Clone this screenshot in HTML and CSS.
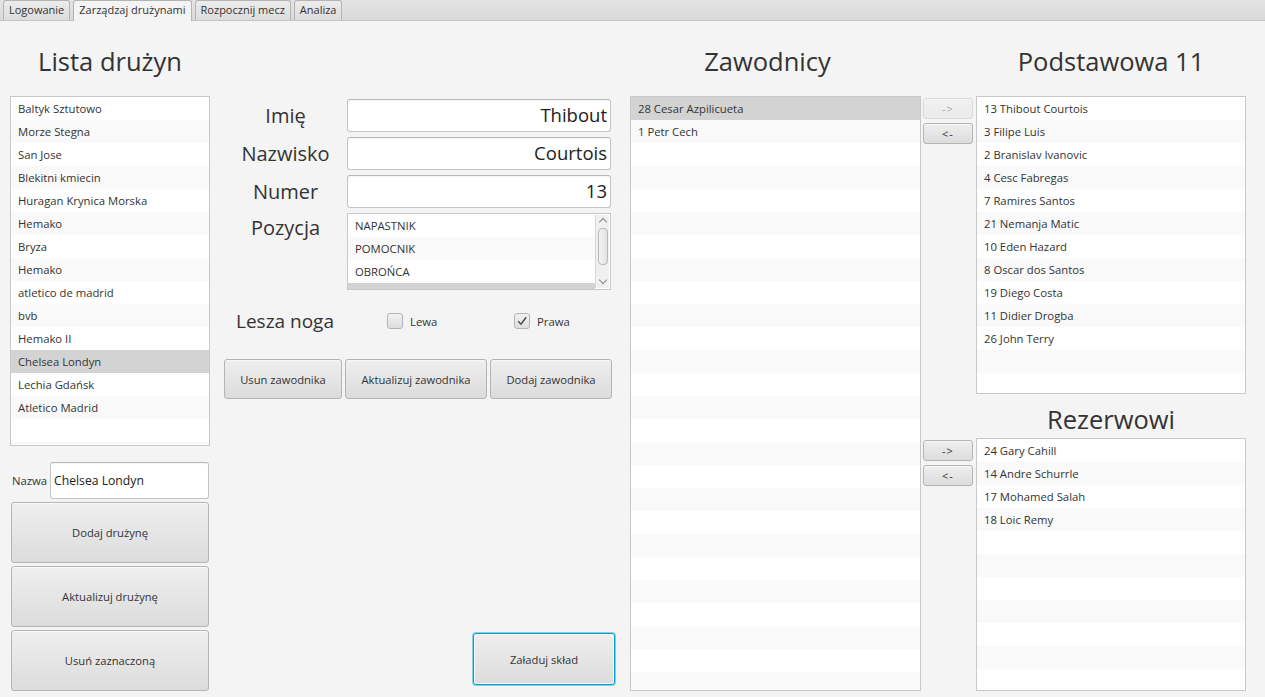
FILE: index.html
```html
<!DOCTYPE html>
<html lang="pl">
<head>
<meta charset="utf-8">
<title>Zarządzaj drużynami</title>
<link rel="stylesheet" href="styles.css">
</head>
<body>
<div class="tabs">
  <div class="tab">Logowanie</div>
  <div class="tab active">Zarządzaj drużynami</div>
  <div class="tab">Rozpocznij mecz</div>
  <div class="tab">Analiza</div>
</div>
<div class="main">
  <section class="col teams">
    <h1 class="title">Lista drużyn</h1>
    <ul class="list teams-list">
      <li>Baltyk Sztutowo</li>
      <li>Morze Stegna</li>
      <li>San Jose</li>
      <li>Blekitni kmiecin</li>
      <li>Huragan Krynica Morska</li>
      <li>Hemako</li>
      <li>Bryza</li>
      <li>Hemako</li>
      <li>atletico de madrid</li>
      <li>bvb</li>
      <li>Hemako II</li>
      <li class="sel">Chelsea Londyn</li>
      <li>Lechia Gdańsk</li>
      <li>Atletico Madrid</li>
      <li></li>
      <li></li>
    </ul>
    <div class="name-row">
      <span class="name-label">Nazwa</span>
      <div class="tf tf-name">Chelsea Londyn</div>
    </div>
    <button class="btn big">Dodaj drużynę</button>
    <button class="btn big">Aktualizuj drużynę</button>
    <button class="btn big">Usuń zaznaczoną</button>
  </section>

  <section class="col form">
    <div class="form-grid">
      <span class="flabel">Imię</span>
      <div class="tf">Thibout</div>
      <span class="flabel">Nazwisko</span>
      <div class="tf">Courtois</div>
      <span class="flabel">Numer</span>
      <div class="tf">13</div>
      <span class="flabel top">Pozycja</span>
      <div class="pos-list">
        <ul class="pos-items">
          <li>NAPASTNIK</li>
          <li>POMOCNIK</li>
          <li>OBROŃCA</li>
          <li class="sel"></li>
        </ul>
        <div class="vscroll">
          <span class="arr up"></span>
          <span class="thumb"></span>
          <span class="arr down"></span>
        </div>
      </div>
    </div>
    <div class="foot-row">
      <span class="foot-label">Lesza noga</span>
      <label class="cb-cell"><span class="cb"></span>Lewa</label>
      <label class="cb-cell last"><span class="cb checked"><svg viewBox="0 0 16 16" width="16" height="16"><path d="M4.2 8.2 L7 11.2 L12.2 4.2" fill="none" stroke="#4a4a4a" stroke-width="1.5"/></svg></span>Prawa</label>
    </div>
    <div class="btn-row">
      <button class="btn w118">Usun zawodnika</button>
      <button class="btn w142">Aktualizuj zawodnika</button>
      <button class="btn w122">Dodaj zawodnika</button>
    </div>
    <button class="btn load">Załaduj skład</button>
  </section>

  <section class="col players">
    <h1 class="title t-players">Zawodnicy</h1>
    <ul class="list players-list">
      <li class="sel">28 Cesar Azpilicueta</li>
      <li>1 Petr Cech</li>
      <li></li><li></li><li></li><li></li><li></li><li></li><li></li><li></li>
      <li></li><li></li><li></li><li></li><li></li><li></li><li></li><li></li>
      <li></li><li></li><li></li><li></li><li></li><li></li><li></li><li></li>
    </ul>
  </section>

  <section class="lineup">
    <h1 class="title t-first">Podstawowa 11</h1>
    <div class="arrows a-first">
      <button class="btn arrow disabled">-&gt;</button>
      <button class="btn arrow">&lt;-</button>
    </div>
    <ul class="list l-first">
      <li>13 Thibout Courtois</li>
      <li>3 Filipe Luis</li>
      <li>2 Branislav Ivanovic</li>
      <li>4 Cesc Fabregas</li>
      <li>7 Ramires Santos</li>
      <li>21 Nemanja Matic</li>
      <li>10 Eden Hazard</li>
      <li>8 Oscar dos Santos</li>
      <li>19 Diego Costa</li>
      <li>11 Didier Drogba</li>
      <li>26 John Terry</li>
      <li></li>
      <li></li>
      <li></li>
    </ul>
    <h1 class="title t-second">Rezerwowi</h1>
    <div class="arrows a-second">
      <button class="btn arrow">-&gt;</button>
      <button class="btn arrow">&lt;-</button>
    </div>
    <ul class="list l-second">
      <li>24 Gary Cahill</li>
      <li>14 Andre Schurrle</li>
      <li>17 Mohamed Salah</li>
      <li>18 Loic Remy</li>
      <li></li><li></li><li></li><li></li><li></li><li></li><li></li><li></li>
    </ul>
  </section>
</div>
</body>
</html>
```

FILE: styles.css
```css
html, body {
  margin: 0;
  padding: 0;
}

body {
  width: 1265px;
  height: 697px;
  overflow: hidden;
  background: #f4f4f4;
  font-family: "Open Sans", "Noto Sans", sans-serif;
  font-size: 11.3px;
  color: #333;
}

/* ---------- tabs ---------- */
.tabs {
  height: 21px;
  box-sizing: border-box;
  display: flex;
  align-items: flex-end;
  gap: 3px;
  padding-left: 3px;
  background: linear-gradient(#e4e4e4, #d9d9d9);
  border-bottom: 1px solid #c4c4c4;
}

.tab {
  height: 20px;
  box-sizing: border-box;
  padding: 0 5px;
  font-size: 11px;
  line-height: 18px;
  border: 1px solid #b4b4b4;
  border-bottom: none;
  border-radius: 3px 3px 0 0;
  background: linear-gradient(#ececec, #dcdcdc);
  white-space: nowrap;
}

.tab.active {
  background: #f4f4f4;
  height: 21px;
  margin-bottom: -1px;
}

/* ---------- main layout ---------- */
.main {
  display: flex;
  height: 676px;
  box-sizing: border-box;
  padding: 0 0 6px 10px;
}

.col {
  display: flex;
  flex-direction: column;
}

.title {
  margin: 0;
  height: 75px;
  box-sizing: border-box;
  padding-top: 24px;
  font-size: 25.5px;
  line-height: 32px;
  font-weight: normal;
  text-align: center;
  color: #333;
  white-space: nowrap;
}

.t-players {
  padding-right: 16px;
}

/* ---------- lists ---------- */
.list {
  list-style: none;
  margin: 0;
  padding: 0;
  background: #fff;
  border: 1px solid #c8c8c8;
  box-sizing: border-box;
  overflow: hidden;
}

.list li,
.pos-items li {
  height: 23px;
  line-height: 23px;
  padding-left: 7px;
  white-space: nowrap;
}

.list li:nth-child(even),
.pos-items li:nth-child(even) {
  background: #f9f9f9;
}

.list li.sel,
.pos-items li.sel {
  background: #d3d3d3;
}

/* ---------- column 1 ---------- */
.teams {
  width: 200px;
}

.teams-list {
  height: 350px;
}

.name-row {
  display: flex;
  align-items: center;
  margin-top: 16px;
  height: 37px;
}

.name-label {
  width: 40px;
  padding-left: 2px;
  box-sizing: border-box;
}

.tf {
  background: #fff;
  border: 1px solid #c4c4c4;
  border-top-color: #b8b8b8;
  border-radius: 3px;
  box-sizing: border-box;
  font-size: 18.5px;
  line-height: 30px;
  height: 33px;
  text-align: right;
  padding: 0 3px;
  color: #222;
  box-shadow: inset 0 1px 1px rgba(0, 0, 0, 0.04);
}

.tf-name {
  width: 159px;
  height: 37px;
  line-height: 35px;
  font-size: 12.2px;
  text-align: left;
  padding-left: 3px;
}

.btn {
  font-family: inherit;
  font-size: 11.2px;
  color: #333;
  border: 1px solid #b4b4b4;
  border-radius: 3px;
  background: linear-gradient(#efefef, #dcdcdc);
  box-shadow: inset 0 1px 0 rgba(255, 255, 255, 0.6);
  padding: 0;
  margin: 0;
  cursor: default;
  white-space: nowrap;
}

.big {
  width: 198px;
  height: 61px;
  margin: 3px 0 0 1px;
}

/* ---------- column 2 (form) ---------- */
.form {
  width: 391px;
  margin-left: 14px;
  padding-top: 78px;
  box-sizing: border-box;
}

.form-grid {
  display: grid;
  grid-template-columns: 123px 264px;
  grid-template-rows: 33px 33px 33px 77px;
  row-gap: 5px;
}

.flabel {
  font-size: 20px;
  line-height: 33px;
  text-align: center;
  color: #333;
}

.flabel.top {
  line-height: 30px;
}

.pos-list {
  display: flex;
  background: #fff;
  border: 1px solid #c8c8c8;
  box-sizing: border-box;
  overflow: hidden;
}

.pos-items {
  list-style: none;
  margin: 0;
  padding: 0;
  flex: 1;
}

.vscroll {
  width: 14px;
  margin: 1px 1px 1px 0;
  background: #f0f0f0;
  border-left: 1px solid #d8d8d8;
  display: flex;
  flex-direction: column;
  align-items: center;
  box-sizing: border-box;
}

.arr {
  display: block;
  width: 5px;
  height: 5px;
  transform: rotate(45deg);
}

.arr.up {
  margin-top: 4px;
  margin-bottom: 3px;
  border-left: 1px solid #888;
  border-top: 1px solid #888;
}

.arr.down {
  margin-top: auto;
  margin-bottom: 5px;
  border-right: 1px solid #888;
  border-bottom: 1px solid #888;
}

.thumb {
  width: 10px;
  height: 37px;
  border: 1px solid #b8b8b8;
  border-radius: 4px;
  background: linear-gradient(90deg, #f4f4f4, #e2e2e2);
  box-sizing: border-box;
}

.foot-row {
  display: flex;
  align-items: center;
  height: 24px;
  margin-top: 19px;
}

.foot-label {
  flex: 0 0 163px;
  padding-left: 12px;
  box-sizing: border-box;
  font-size: 19px;
  color: #333;
  white-space: nowrap;
}

.cb-cell {
  display: flex;
  align-items: center;
  gap: 7px;
  flex: 0 0 127px;
}

.cb-cell.last {
  flex: 0 0 auto;
}

.cb {
  width: 16px;
  height: 16px;
  box-sizing: border-box;
  border: 1px solid #b4b4b4;
  border-radius: 3px;
  background: linear-gradient(#f2f2f2, #dedede);
  position: relative;
}

.cb svg {
  position: absolute;
  left: -1px;
  top: -1px;
}

.btn-row {
  display: flex;
  gap: 3px;
  margin-top: 26px;
}

.btn-row .btn {
  height: 40px;
}

.w118 { width: 118px; }
.w142 { width: 142px; }
.w122 { width: 122px; }

.load {
  margin-top: auto;
  align-self: flex-end;
  width: 142px;
  height: 52px;
  margin-bottom: 6px;
  border: 1px solid #039ed3;
  box-shadow: 0 0 0 1px rgba(3, 158, 211, 0.45), inset 0 0 0 1px #f4fafd;
}

/* ---------- column 3 ---------- */
.players {
  width: 291px;
  margin-left: 15px;
}

.players-list {
  flex: 1;
}

/* ---------- column 4 / 5 ---------- */
.lineup {
  margin-left: 2px;
  display: grid;
  grid-template-columns: 50px 270px;
  grid-template-rows: 75px 298px 44px 253px;
  column-gap: 3px;
}

.t-first { grid-column: 2; grid-row: 1; }
.a-first { grid-column: 1; grid-row: 2; }
.l-first { grid-column: 2; grid-row: 2; }
.t-second {
  grid-column: 2;
  grid-row: 3;
  height: 44px;
  padding-top: 9px;
}
.a-second { grid-column: 1; grid-row: 4; }
.l-second { grid-column: 2; grid-row: 4; }

.arrows {
  display: flex;
  flex-direction: column;
  gap: 4px;
  padding-top: 2px;
}

.arrow {
  width: 50px;
  height: 21px;
  font-size: 11px;
  letter-spacing: 1px;
}

.arrow.disabled {
  opacity: 0.4;
}
```
